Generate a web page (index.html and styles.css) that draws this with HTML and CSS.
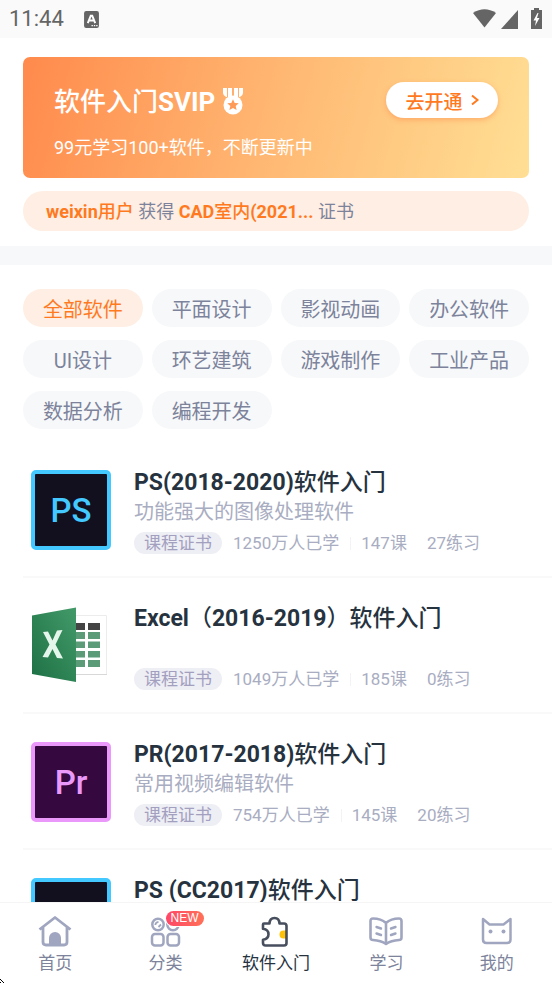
FILE: index.html
```html
<!DOCTYPE html>
<html lang="zh-CN">
<head>
<meta charset="utf-8">
<meta name="viewport" content="width=device-width, initial-scale=1">
<title>软件入门</title>
<link rel="stylesheet" href="styles.css">
</head>
<body>
<header class="status">
  <div class="status-group">
    <span class="clock">11:44</span>
    <svg width="15" height="17" viewBox="0 0 14 16"><rect width="14" height="16" rx="2" fill="#656565"/><path d="M3.500 11.500L6.300 4.500h1.400l2.800 7M4.800 9h4.400" fill="none" stroke="#fff" stroke-width="1.800"/><path d="M7 13.800h1.300M9.200 13.800h1.300M11.400 13.800h1.300" stroke="#fff" stroke-width="1.200"/></svg>
  </div>
  <svg width="70" height="21" viewBox="0 0 70 21" fill="#656565"><path d="M0 4Q11.500-3.500 23 4L11.500 18.500z"/><path d="M45 1v19H28z"/><path d="M58 1h3V-1h5v2h3v19H58z"/><path d="M64.500 4l-4 7.500h2.500l-1 5.500 4.500-8H64l1.500-5z" fill="#fff"/></svg>
</header>

<main class="content">
  <section class="promo">
    <div class="banner">
      <div>
        <h1 class="banner-title"><span>软件入门<b>SVIP</b></span>
          <svg width="20" height="28" viewBox="0 0 20 28"><path d="M0 0h4v9H3Q0 7.500 0 5zM5 0h4v8.500L5 9.500zM11 0h4v9.500l-4-1zM16 0h4v5q0 2.500-3 4h-1z" fill="#fff"/><circle cx="10" cy="17" r="9.500" fill="#fff"/><path d="M10 11.200l1.700 3.700 4 .4-3 2.700.9 4-3.600-2.100L6.400 22l.9-4-3-2.700 4-.4z" fill="#ff9b58"/></svg>
        </h1>
        <p class="banner-text">99元学习100+软件，不断更新中</p>
      </div>
      <button class="open-btn" type="button">去开通<svg width="8" height="12" viewBox="0 0 8 12"><path d="M1 1.500L6.500 6 1 10.500" fill="none" stroke="#ff7a1f" stroke-width="2"/></svg></button>
    </div>
    <p class="notice"><strong><b>weixin</b>用户</strong> 获得 <strong><b>CAD</b>室内<b>(2021...</b></strong> 证书</p>
  </section>

  <section class="filters">
    <button type="button" class="chip chip-on">全部软件</button>
    <button type="button" class="chip">平面设计</button>
    <button type="button" class="chip">影视动画</button>
    <button type="button" class="chip">办公软件</button>
    <button type="button" class="chip">UI设计</button>
    <button type="button" class="chip">环艺建筑</button>
    <button type="button" class="chip">游戏制作</button>
    <button type="button" class="chip">工业产品</button>
    <button type="button" class="chip">数据分析</button>
    <button type="button" class="chip">编程开发</button>
  </section>

  <ul class="courses">
    <li class="course">
      <div class="logo logo-ps">PS</div>
      <div class="info">
        <h2 class="course-title"><b>PS(2018-2020)</b>软件入门</h2>
        <p class="desc">功能强大的图像处理软件</p>
        <div class="meta"><span class="tag">课程证书</span><span class="learners">1250万人已学</span><span class="lessons">147课</span><span>27练习</span></div>
      </div>
    </li>
    <li class="course">
      <svg class="excel" viewBox="0 0 80 80">
        <defs><linearGradient id="green" x1="0" y1="1" x2="1" y2="0"><stop offset="0" stop-color="#1d7044"/><stop offset="1" stop-color="#439a69"/></linearGradient></defs>
        <path d="M44 9.500h31.500v59H44z" fill="#fff" stroke="#ececec"/>
        <path d="M44 68.500h32" stroke="#d8d8d8"/>
        <path d="M44 17h10v7H44zM57 17h12v7H57z" fill="#444"/>
        <path d="M44 26h10v7H44zM57 26h12v7H57zM44 35.500h10v6.500H44zM57 35.500h12v6.500H57zM44 45h10v6.500H44zM57 45h12v6.500H57zM44 54h10v7H44zM57 54h12v7H57z" fill="#5b9b78"/>
        <path d="M1 9.500L45 1.500v74.500L1 68z" fill="url(#green)"/>
        <path d="M12 26l5-.5 4.500 9 4.500-10 5.500-.5-7 14.500 7.500 14-6-.5-4.500-9-4.500 8.500-5.500-.5 7-12.500z" fill="#e4f5eb"/>
      </svg>
      <div class="info">
        <h2 class="course-title"><b>Excel</b>（<b>2016-2019</b>）软件入门</h2>
        <p class="desc"></p>
        <div class="meta"><span class="tag">课程证书</span><span class="learners">1049万人已学</span><span class="lessons">185课</span><span>0练习</span></div>
      </div>
    </li>
    <li class="course">
      <div class="logo logo-pr">Pr</div>
      <div class="info">
        <h2 class="course-title"><b>PR(2017-2018)</b>软件入门</h2>
        <p class="desc">常用视频编辑软件</p>
        <div class="meta"><span class="tag">课程证书</span><span class="learners">754万人已学</span><span class="lessons">145课</span><span>20练习</span></div>
      </div>
    </li>
    <li class="course">
      <div class="logo logo-ps"></div>
      <div class="info">
        <h2 class="course-title"><b>PS (CC2017)</b>软件入门</h2>
      </div>
    </li>
  </ul>
</main>

<nav class="tabs">
  <a class="tab" href="#home">
    <svg width="34" height="32" viewBox="0 0 34 32"><path d="M1.500 14.500L17 2.500l15.500 12M5 12.500V27q0 3 3 3h18q3 0 3-3V12.500" fill="none" stroke="#a0a6bf" stroke-width="2.800" stroke-linejoin="round"/><path d="M11 29v-6a6 6 0 0 1 12 0v6z" fill="#a0a6bf"/></svg>
    首页
  </a>
  <a class="tab" href="#category">
    <span class="icon-wrap">
      <svg width="34" height="32" viewBox="0 0 34 32" fill="none" stroke="#a0a6bf" stroke-width="2.500"><circle cx="9" cy="9.500" r="5.700"/><path d="M6.300 10q.2-2.800 3.200-3.200M9.500 12l2.500-2.500" stroke-width="1.800"/><circle cx="24" cy="9.500" r="5.700"/><rect x="3" y="19" width="11.500" height="11.500" rx="3"/><rect x="18.500" y="19" width="11.500" height="11.500" rx="3"/></svg>
      <span class="badge">NEW</span>
    </span>
    分类
  </a>
  <a class="tab tab-on" href="#software">
    <svg width="34" height="32" viewBox="0 0 34 32"><path d="M27.500 15.500v8h-3a4 4 0 0 1 0-8z" fill="#ffc107"/><path d="M5 8.500h5.500q.2-5.500 5-5.500t5 5.500H25q2.500 0 2.500 2.500v17q0 2.500-2.500 2.500H6.500Q4 30.500 4 28v-3.200q5.500-.8 5.500-5.500T4 13.800V9.500q0-1 1-1z" fill="none" stroke="#474e5d" stroke-width="2.600" stroke-linejoin="round"/></svg>
    软件入门
  </a>
  <a class="tab" href="#study">
    <svg width="34" height="32" viewBox="0 0 34 32" fill="none" stroke="#a0a6bf" stroke-width="2.600" stroke-linejoin="round" stroke-linecap="round"><path d="M17 8Q12 3.500 4 3.500 1.500 3.500 1.500 6v16.500Q1.500 25 4 25q8 .5 13 4 5-3.500 13-4 2.500 0 2.500-2.500V6q0-2.500-2.500-2.500-8 0-13 4.500zM17 8v20.500"/><path d="M7.500 12l4.500 1.500M7.500 18.500l4.500 1.500M26.500 12L22 13.500M26.500 18.500L22 20" stroke-width="2.400"/></svg>
    学习
  </a>
  <a class="tab" href="#mine">
    <svg width="34" height="32" viewBox="0 0 34 32"><path d="M3 4l6.500 5.500h14L30.500 4v20.500q0 3.500-3.500 3.500H6.500Q3 28 3 24.500z" fill="none" stroke="#a0a6bf" stroke-width="2.500" stroke-linejoin="round"/><circle cx="10.500" cy="16.500" r="2" fill="#a0a6bf"/><circle cx="23.500" cy="16.500" r="2" fill="#a0a6bf"/></svg>
    我的
  </a>
</nav>
<svg class="pointer" width="4" height="4" viewBox="0 0 4 4"><path d="M0 0h1v1H0zM1 1h1v1H1zM2 2h1v1H2zM3 3h1v1H3zM0 3h1v1H0z"/></svg>
</body>
</html>
```
FILE: styles.css
```css
* { box-sizing: border-box; margin: 0; padding: 0; }

body {
  display: flex;
  flex-direction: column;
  height: 100vh;
  overflow: hidden;
  background: #fff;
  font-family: Roboto, "Noto Sans CJK SC", sans-serif;
  color: #7c839b;
}

button { border: 0; font: inherit; color: inherit; }
svg { display: block; flex: none; overflow: visible; }
b { font-weight: 700; }

.status {
  display: flex;
  flex: none;
  justify-content: space-between;
  align-items: center;
  height: 38px;
  padding: 0 9px;
  background: #fafafa;
  color: #656565;
}
.status-group { display: flex; align-items: center; gap: 20px; }
.clock { font-size: 22px; line-height: 38px; }

.content {
  flex: 1;
  min-height: 0;
  overflow-y: auto;
  scrollbar-width: none;
}

.promo {
  padding: 19px 23px 15px;
  border-bottom: 19px solid #f7f8fa;
}
.banner {
  display: flex;
  justify-content: space-between;
  align-items: flex-start;
  height: 121px;
  padding: 25px 31px 0;
  border-radius: 7px;
  background: linear-gradient(105deg, #ff8a4c, #ffb873 50%, #ffdf94);
  color: #fff;
}
.banner-title {
  display: flex;
  align-items: center;
  gap: 8px;
  font-size: 26px;
  font-weight: 500;
  line-height: 40px;
}
.banner-text { margin-top: 12px; font-size: 18px; line-height: 28px; }
.open-btn {
  display: flex;
  justify-content: center;
  align-items: center;
  gap: 8px;
  width: 112px;
  height: 36px;
  border-radius: 18px;
  background: #fff;
  box-shadow: 0 2px 5px #ff8a4c80;
  color: #ff7a1f;
  font-size: 19px;
  font-weight: 500;
}
.notice {
  height: 40px;
  margin-top: 13px;
  padding: 0 23px;
  border-radius: 20px;
  background: #ffeee3;
  font-size: 18px;
  line-height: 42px;
  white-space: nowrap;
}
.notice strong { color: #ff7a1f; font-weight: 500; }

.filters {
  display: grid;
  grid-template-columns: repeat(4, 1fr);
  gap: 13px 9px;
  padding: 24px 23px 13px;
}
.chip {
  height: 38px;
  border-radius: 19px;
  background: #f7f8fa;
  font-size: 20px;
}
.chip-on { background: #ffeee3; color: #ff7a1f; }

.courses { list-style: none; padding-left: 23px; }
.course {
  display: flex;
  gap: 23px;
  height: 136px;
  padding: 27px 23px 0 8px;
  border-bottom: 2px solid #f9f9fa;
}
.logo {
  display: flex;
  flex: none;
  justify-content: center;
  align-items: center;
  width: 80px;
  height: 80px;
  margin-top: 1px;
  border: 4px solid;
  border-radius: 5px;
  font-size: 33px;
  font-weight: 500;
}
.logo-ps { border-color: #43c9ff; background: #12101f; color: #43c9ff; }
.logo-pr { border-color: #ea99fb; background: #35083f; color: #ea99fb; }
.excel { width: 80px; height: 80px; margin-top: 1px; }

.course-title {
  color: #26333f;
  font-size: 23px;
  font-weight: 500;
  line-height: 28px;
  white-space: nowrap;
}
.desc { height: 30px; color: #a9adc1; font-size: 20px; line-height: 30px; }
.meta {
  display: flex;
  align-items: center;
  margin-top: 5px;
  color: #a9adc1;
  font-size: 17px;
  line-height: 22px;
  white-space: nowrap;
}
.tag {
  margin-right: 11px;
  padding: 0 10px;
  border-radius: 11px;
  background: #eeeef5;
  color: #a39fbf;
}
.learners { padding-right: 11px; }
.lessons {
  margin-right: 20px;
  padding-left: 11px;
  background: linear-gradient(#f3f3f6, #f3f3f6) left center / 1px 13px no-repeat;
}

.tabs {
  display: grid;
  flex: none;
  grid-template-columns: repeat(5, 1fr);
  height: 81px;
  border-top: 1px solid #f5f5f6;
  background: #fff;
}
.tab {
  display: flex;
  flex-direction: column;
  align-items: center;
  gap: 4px;
  padding-top: 12px;
  color: #7c839b;
  font-size: 17px;
  line-height: 24px;
  text-decoration: none;
}
.tab-on { color: #26333f; }
.icon-wrap { position: relative; }
.badge {
  position: absolute;
  top: -4px;
  left: 17px;
  padding: 0 5px;
  border-radius: 8px;
  background: linear-gradient(90deg, #ff4767, #ff7058);
  color: #fff;
  font-family: "Liberation Sans", sans-serif;
  font-size: 12px;
  line-height: 15px;
  box-shadow: 0 0 0 1px #fff;
}
.pointer { position: absolute; left: 0; bottom: 0; }
```
